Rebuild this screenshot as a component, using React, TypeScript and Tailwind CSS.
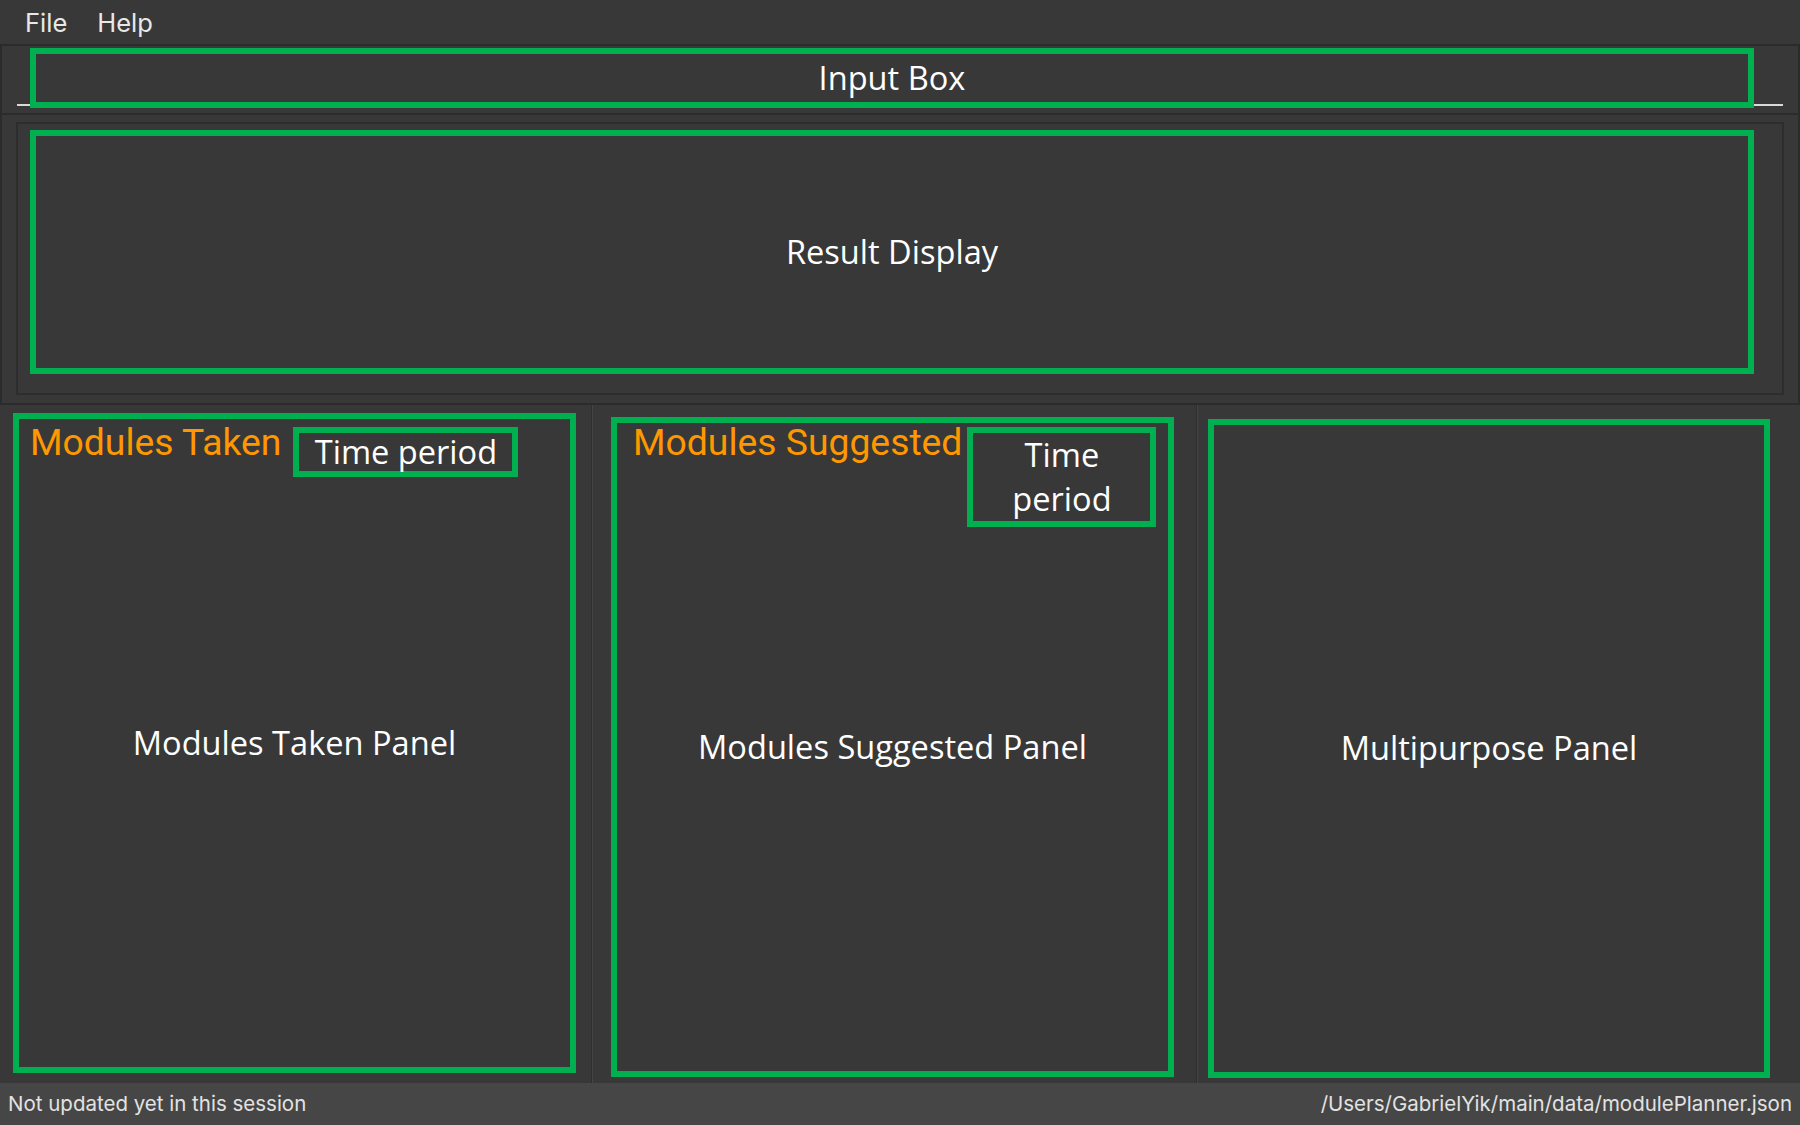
import React from "react";

const GREEN = "border-[#00b050]";

function TitleRowTaken() {
  return (
    <div className="[grid-area:1/1] self-start flex items-start pl-[11px]">
      <div className="mt-[5px] leading-none text-[37.3px] text-[#ff9800] font-['Roboto',sans-serif] whitespace-nowrap">
        Modules Taken
      </div>
      <div className={`ml-[12px] mt-[8px] w-[225px] h-[50px] border-[6px] ${GREEN} flex items-center justify-center text-[32.6px] leading-none text-white font-['Open_Sans',sans-serif] whitespace-nowrap`}>
        Time period
      </div>
    </div>
  );
}

function TitleRowSuggested() {
  return (
    <div className="[grid-area:1/1] self-start flex items-start pl-[16px]">
      <div className="mt-[1px] leading-none text-[37.3px] text-[#ff9800] font-['Roboto',sans-serif] whitespace-nowrap">
        Modules Suggested
      </div>
      <div className={`ml-[5px] mt-[4px] w-[189px] h-[100px] border-[6px] ${GREEN} flex items-center justify-center text-center text-[32.6px] leading-[44px] text-white font-['Open_Sans',sans-serif]`}>
        Time
        <br />
        period
      </div>
    </div>
  );
}

function CenterLabel({ text }: { text: string }) {
  return (
    <div className="[grid-area:1/1] self-center justify-self-center text-[32.6px] leading-none text-white font-['Open_Sans',sans-serif] whitespace-nowrap">
      {text}
    </div>
  );
}

export default function App() {
  return (
    <div className="w-[1800px] h-[1125px] bg-[#383838] flex flex-col overflow-hidden">
      {/* Menu bar */}
      <div className="h-[46px] shrink-0 flex items-center gap-[30px] pl-[25px] pt-[3px] border-b-2 border-[#2b2b2b] text-[25.5px] text-[#e8e8e8] font-['Inter',sans-serif]">
        <span>File</span>
        <span>Help</span>
      </div>

      {/* Input section */}
      <div className="h-[67px] shrink-0 border-x-2 border-[#2b2b2b] pt-[1px] px-[15px]">
        <div className="relative h-[59px] border-b-2 border-[#d9d9d9]">
          <div className={`absolute left-[13px] top-[1px] w-[1724px] h-[60px] border-[6px] ${GREEN} flex items-center justify-center text-[32.6px] leading-none text-white font-['Open_Sans',sans-serif]`}>
            Input Box
          </div>
        </div>
      </div>

      {/* Result display section */}
      <div className="h-[292px] shrink-0 border-2 border-[#2b2b2b] px-[14px] pt-[7px]">
        <div className="h-[273px] border-2 border-[#2d2d2d] pl-[12px] pt-[6px]">
          <div className={`w-[1724px] h-[244px] border-[6px] ${GREEN} flex items-center justify-center text-[32.6px] leading-none text-white font-['Open_Sans',sans-serif]`}>
            Result Display
          </div>
        </div>
      </div>

      {/* Panels */}
      <div className="flex-1 flex min-h-0">
        <div className="w-[591px] shrink-0 pl-[13px] pt-[8px]">
          <div className={`grid w-[563px] h-[660px] border-[6px] ${GREEN}`}>
            <TitleRowTaken />
            <CenterLabel text="Modules Taken Panel" />
          </div>
        </div>
        <div className="w-[2px] shrink-0 bg-[#2e2e2e] border-r border-[#444444]" />
        <div className="w-[603px] shrink-0 pl-[18px] pt-[12px]">
          <div className={`grid w-[563px] h-[660px] border-[6px] ${GREEN}`}>
            <TitleRowSuggested />
            <CenterLabel text="Modules Suggested Panel" />
          </div>
        </div>
        <div className="w-[2px] shrink-0 bg-[#2e2e2e] border-r border-[#444444]" />
        <div className="flex-1 pl-[10px] pt-[14px]">
          <div className={`grid w-[562px] h-[659px] border-[6px] ${GREEN}`}>
            <CenterLabel text="Multipurpose Panel" />
          </div>
        </div>
      </div>

      {/* Status bar */}
      <div className="h-[42px] shrink-0 bg-[#464646] flex items-center justify-between px-[8px] text-[20.5px] text-[#e2e2e2] font-['Inter',sans-serif]">
        <span>Not updated yet in this session</span>
        <span>/Users/GabrielYik/main/data/modulePlanner.json</span>
      </div>
    </div>
  );
}
